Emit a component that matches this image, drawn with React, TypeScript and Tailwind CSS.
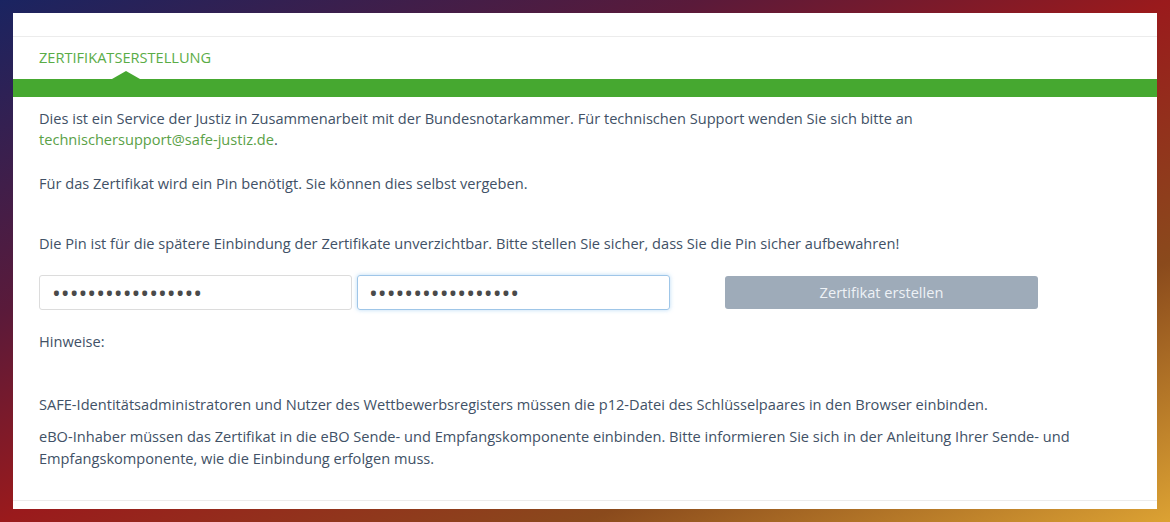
import { useState } from "react";

export default function App() {
  const [pin, setPin] = useState("abcdefghijklmnopq");
  const [pin2, setPin2] = useState("abcdefghijklmnopq");

  return (
    <div className="w-[1170px] h-[522px] overflow-hidden bg-[linear-gradient(to_bottom_right,#1a2461_0%,#5a1a3a_30%,#9a1a1c_50%,#8a4a1c_75%,#dca233_100%)] pt-[13px] pl-[13px]">
      <div
        className="w-[1144px] h-[496px] bg-white flex flex-col text-[14.6px] text-[#415166]"
        style={{ fontFamily: '"Open Sans", "Noto Sans", sans-serif' }}
      >
        {/* top strip */}
        <div className="h-[24px] border-b border-[#ececec] shrink-0" />

        {/* Tab */}
        <div className="h-[42px] px-[26px] flex items-center shrink-0">
          <span className="text-[#5aac46] text-[14.6px]">ZERTIFIKATSERSTELLUNG</span>
        </div>
        <div className="relative h-[18px] bg-[#46a830] shrink-0">
          <div className="absolute left-[99px] -top-[8px] w-0 h-0 border-l-[14px] border-r-[14px] border-b-[8px] border-l-transparent border-r-transparent border-b-[#46a830]" />
        </div>

        {/* Content */}
        <div className="px-[26px] pt-[11px] flex flex-col leading-[21px]">
          <p>
            Dies ist ein Service der Justiz in Zusammenarbeit mit der Bundesnotarkammer. Für technischen Support wenden Sie sich bitte an{" "}
            <a className="text-[#5aa147] whitespace-nowrap">technischersupport@safe-justiz.de</a>.
          </p>
          <p className="mt-[23px]">Für das Zertifikat wird ein Pin benötigt. Sie können dies selbst vergeben.</p>
          <p className="mt-[39px]">
            Die Pin ist für die spätere Einbindung der Zertifikate unverzichtbar. Bitte stellen Sie sicher, dass Sie die Pin sicher aufbewahren!
          </p>

          <div className="mt-[21px] flex items-center">
            <input
              type="password"
              value={pin}
              onChange={(e) => setPin(e.target.value)}
              className="w-[313px] h-[35px] rounded-[3px] border border-[#dcdcdc] px-[12px] text-[23.5px] text-[#4a4a4a] outline-none"
            />
            <input
              type="password"
              value={pin2}
              onChange={(e) => setPin2(e.target.value)}
              className="ml-[5px] w-[313px] h-[35px] rounded-[3px] border border-[#9fc6e8] shadow-[0_0_4px_rgba(102,175,233,0.45)] px-[11px] text-[23.5px] text-[#4a4a4a] outline-none"
            />
            <button className="ml-[55px] w-[313px] h-[33px] rounded-[3px] bg-[#9eabb9] text-[#eef2f6] text-[14.6px]">
              Zertifikat erstellen
            </button>
          </div>

          <p className="mt-[21px]">Hinweise:</p>
          <p className="mt-[42px]">
            SAFE-Identitätsadministratoren und Nutzer des Wettbewerbsregisters müssen die p12-Datei des Schlüsselpaares in den Browser einbinden.
          </p>
          <p className="mt-[10px] leading-[22px]">
            eBO-Inhaber müssen das Zertifikat in die eBO Sende- und Empfangskomponente einbinden. Bitte informieren Sie sich in der Anleitung Ihrer Sende- und Empfangskomponente, wie die Einbindung erfolgen muss.
          </p>
        </div>

        <div className="mt-auto mb-[8px] border-b border-[#ececec]" />
      </div>
    </div>
  );
}
